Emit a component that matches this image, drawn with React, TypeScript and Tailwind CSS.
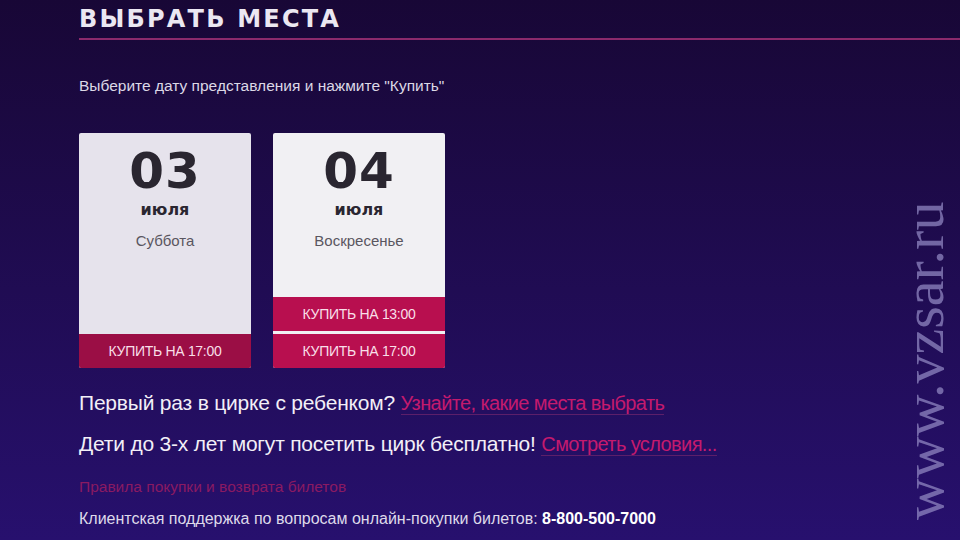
import React from "react";

function DateCard({ day, month, weekday, times, tint }: { day: string; month: string; weekday: string; times: string[]; tint: string }) {
  return (
    <div className={`flex h-[235px] w-[172px] flex-col overflow-hidden rounded-[2px] ${tint}`}>
      <div className="flex flex-1 flex-col items-center pt-[12px]">
        <div className="font-['DejaVu_Sans',sans-serif] text-[50px] font-bold leading-[52px] tracking-[1px] text-[#2a2630]">{day}</div>
        <div className="mt-[3px] font-['DejaVu_Sans',sans-serif] text-[16px] font-bold leading-[20px] text-[#2a2630]">{month}</div>
        <div className="mt-[12px] font-['Liberation_Sans',sans-serif] text-[15px] leading-[18px] text-[#5a5660]">{weekday}</div>
      </div>
      <div className="flex flex-col gap-[3px]">
        {times.map((t) => (
          <div
            key={t}
            className={`flex h-[34px] items-center justify-center font-['Liberation_Sans',sans-serif] text-[14px] tracking-[-0.3px] text-[#f8dfe8] ${
              times.length > 1 ? "bg-[#b80f4f]" : "bg-[#9b0e45]"
            }`}
          >
            КУПИТЬ НА {t}
          </div>
        ))}
      </div>
    </div>
  );
}

export default function App() {
  return (
    <div className="relative h-[540px] w-[960px] overflow-hidden bg-gradient-to-b from-[#180736] to-[#27106e] font-['Liberation_Sans',sans-serif]">
      <div className="pl-[79px] pt-[5px]">
        <h1 className="font-['DejaVu_Sans',sans-serif] text-[24px] font-bold leading-[28px] tracking-[2.2px] text-[#ebe7f2]">ВЫБРАТЬ МЕСТА</h1>
        <div className="mt-[5px] h-[2px] bg-[#8c2a6c]" />
        <p className="mt-[37px] text-[15.5px] leading-[18px] text-[#dcd8e6]">Выберите дату представления и нажмите "Купить"</p>
        <div className="mt-[38px] flex gap-[22px]">
          <DateCard day="03" month="июля" weekday="Суббота" times={["17:00"]} tint="bg-[#e6e3ec]" />
          <DateCard day="04" month="июля" weekday="Воскресенье" times={["13:00", "17:00"]} tint="bg-[#f1f0f3]" />
        </div>
        <p className="mt-[22px] text-[21px] leading-[26px] tracking-[-0.2px] text-[#f2eff7]">
          Первый раз в цирке с ребенком?{" "}
          <span className="border-b border-[#5c1f6a] text-[20px] tracking-[-0.6px] text-[#c41a6e]">Узнайте, какие места выбрать</span>
        </p>
        <p className="mt-[15px] text-[21px] leading-[26px] tracking-[-0.2px] text-[#f2eff7]">
          Дети до 3-х лет могут посетить цирк бесплатно!{" "}
          <span className="border-b border-[#5c1f6a] text-[20px] tracking-[-0.6px] text-[#c41a6e]">Смотреть условия...</span>
        </p>
        <p className="mt-[21px] text-[15.5px] leading-[18px] text-[#8a1a62]">Правила покупки и возврата билетов</p>
        <p className="mt-[13px] text-[16px] leading-[20px] text-[#dedaea]">
          Клиентская поддержка по вопросам онлайн-покупки билетов: <span className="font-bold text-white">8-800-500-7000</span>
        </p>
      </div>
      <div className="absolute left-[902px] top-[520px] origin-top-left -rotate-90 whitespace-nowrap font-['Liberation_Serif',serif] text-[58px] leading-[44px] text-[#8f86c0]/75">
        www.vzsar.ru
      </div>
    </div>
  );
}
